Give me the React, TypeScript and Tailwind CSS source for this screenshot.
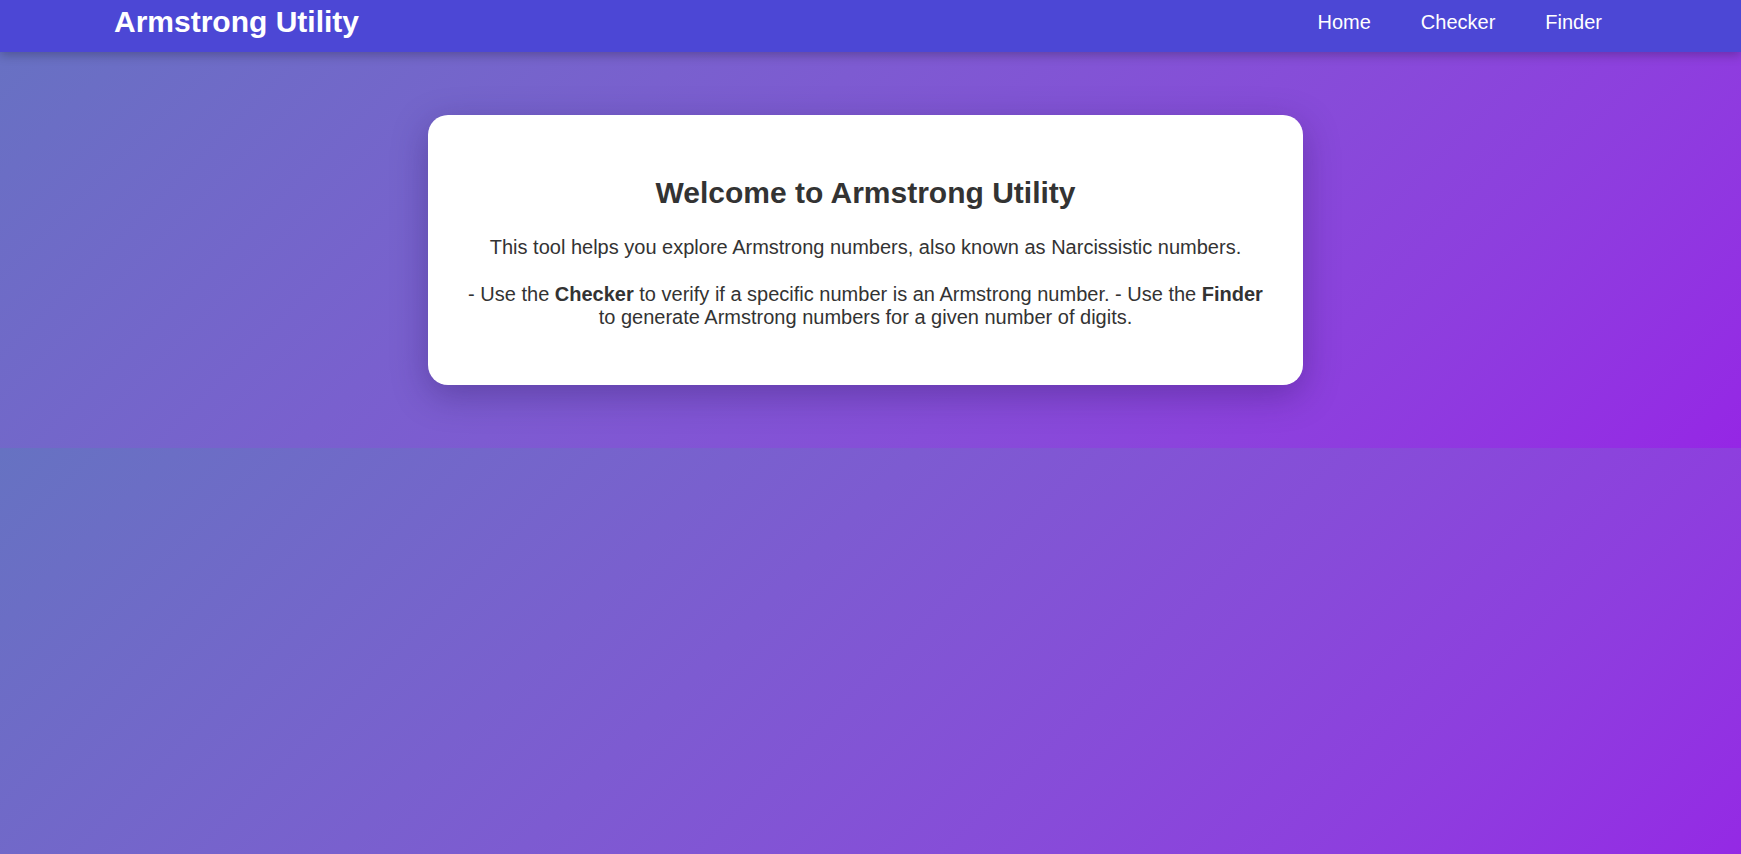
export default function App() {
  return (
    <div
      className="min-h-screen bg-linear-135 from-[#6672c2] to-[#9526e5] bg-[length:100%_448px] bg-repeat text-[#333]"
      style={{ fontFamily: '"Liberation Sans", Arial, sans-serif' }}
    >
      {/* Header */}
      <header className="h-[52px] bg-[#4c47d5] shadow-[0_3px_10px_rgba(0,0,0,0.25)] flex items-center justify-between pl-[114px] pr-[139px] pb-[8px] relative z-10">
        <h1 className="text-[30px] leading-[34px] font-bold text-white">Armstrong Utility</h1>
        <nav className="flex gap-[50px] text-[20px] text-white">
          <a href="#">Home</a>
          <a href="#">Checker</a>
          <a href="#">Finder</a>
        </nav>
      </header>

      {/* Intro card */}
      <main className="flex justify-center pr-[10px] pt-[63px] pb-[63px]">
        <section className="w-[875px] bg-white rounded-[20px] shadow-[0_10px_35px_rgba(40,20,90,0.35)] px-[36px] pt-[61px] pb-[56px] text-center">
          <h2 className="text-[30px] leading-[34px] font-bold mb-[26px]">
            Welcome to Armstrong Utility
          </h2>
          <p className="text-[20px] leading-[23px] mb-[24px]">
            This tool helps you explore Armstrong numbers, also known as Narcissistic numbers.
          </p>
          <p className="text-[20px] leading-[23px]">
            - Use the <strong>Checker</strong> to verify if a specific number is an Armstrong
            number. - Use the <strong>Finder</strong> to generate Armstrong numbers for a given
            number of digits.
          </p>
        </section>
      </main>
    </div>
  );
}
